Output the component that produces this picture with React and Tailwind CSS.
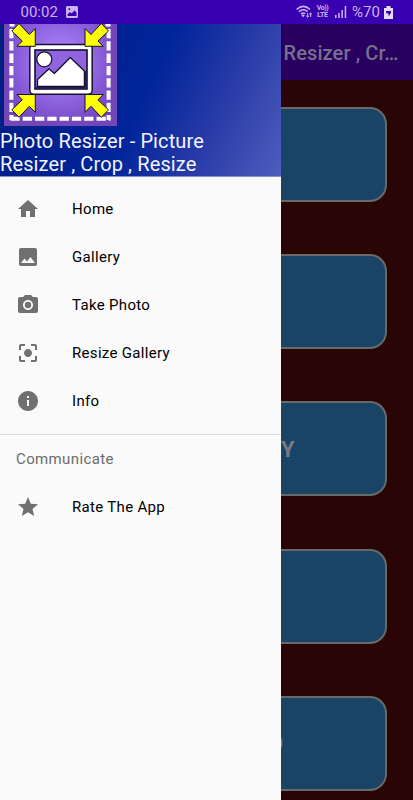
import {
	MdCameraAlt,
	MdCenterFocusStrong,
	MdGrade,
	MdHome,
	MdImage,
	MdInfo,
} from "react-icons/md";

const menuItems = [
	{ label: "Home", icon: MdHome },
	{ label: "Gallery", icon: MdImage },
	{ label: "Take Photo", icon: MdCameraAlt },
	{ label: "Resize Gallery", icon: MdCenterFocusStrong },
	{ label: "Info", icon: MdInfo },
];

const StatusBar = () => {
	return (
		<div className="flex h-6 shrink-0 items-center bg-[#3900b1] pl-[20.5px] pr-5 text-[#c9b5ee]">
			<span className="w-[38px] text-[15px] leading-6 whitespace-nowrap">
				00:02
			</span>
			<svg className="ml-[7px]" width="12" height="12" viewBox="0 0 12 12">
				<path
					fill="currentColor"
					fillRule="evenodd"
					d="M1 0h10l1 1v10l-1 1H1l-1-1V1zM1.5 8.5V10h9V6.5L8.5 4.5 5.5 7.5 4 6zM2.5 2.3v1.6h1.6V2.3z"
				/>
			</svg>
			<div className="ml-auto flex items-center">
				{/* Wifi */}
				<svg width="17" height="14" viewBox="0 0 17 14" fill="none" stroke="currentColor">
					<path strokeWidth="1.5" d="M.6 4.5Q7.3-1.8 14 4.5M2.8 6.8Q7.3 2.7 11.6 6.5M5 9.1Q7.3 7 9.2 8.6" />
					<path fill="currentColor" stroke="none" d="M5.4 10.4Q7.2 8.8 8.8 10.4L7.2 12.2z" />
					<path strokeWidth="1" d="M11.6 8v4M10.2 10.8l1.4 1.4 1.4-1.4M14.6 12V8M13.2 9.4l1.4-1.4L16 9.4" />
				</svg>
				<div className="ml-[3px] w-[13px] text-center text-[7px] font-bold leading-[7px]">
					<div className="tracking-[-0.5px] whitespace-nowrap">Vo))</div>
					<div className="tracking-[-0.2px]">LTE</div>
				</div>
				<svg className="ml-[6px]" width="12" height="12" viewBox="0 0 12 12" fill="currentColor">
					<path d="M0 9h1.5v3H0zM3.2 7h1.5v5H3.2zM6.4 4h1.5v8H6.4zM9.7 0h1.5v12H9.7z" />
				</svg>
				<span className="ml-[5px] w-[28px] text-[15px] leading-6 whitespace-nowrap">
					%70
				</span>
				<svg className="ml-[4px]" width="9" height="13" viewBox="0 0 9 13">
					<path fill="#e5dcf8" d="M2.5 0h4v2H9v11H0V2h2.5z" />
					<path fill="#3900b1" d="M2 5h5v2L4.6 10.6V7.6H2.5z" />
				</svg>
			</div>
		</div>
	);
};

const Arrow = ({ transform }) => (
	<path
		transform={transform}
		d="M11.8 31 19 23.5 29.3 34.5 35.3 28.5V46.3H17L22.3 41z"
		fill="#fdfd05"
		stroke="#15102e"
		strokeWidth="1"
		strokeLinejoin="round"
	/>
);

/* Launcher artwork, its top edge runs under the status bar */
const AppLogo = () => {
	return (
		<svg className="ml-1 block" width="113" height="102" viewBox="4 24 113 102">
			<defs>
				<radialGradient id="glow" cx="50%" cy="45%" r="65%">
					<stop offset="0" stopColor="#b48cff" />
					<stop offset="0.5" stopColor="#9368e4" />
					<stop offset="1" stopColor="#7042bd" />
				</radialGradient>
			</defs>
			<rect x="4" y="14" width="113" height="112" fill="#7446b8" />
			<rect x="9" y="14" width="102" height="107" fill="url(#glow)" />
			<g stroke="#fff" strokeWidth="4" strokeDasharray="9.3 3" fill="none">
				<path d="M11.4 29V120M108.6 29V120" />
				<path d="M9.4 118.8H110.6" strokeDashoffset="-1" />
			</g>
			<path stroke="#fff" strokeWidth="3" d="M9.5 25h5M105.5 25h5" />
			<rect x="29.8" y="44.5" width="62.4" height="49.8" rx="4" fill="#fff" stroke="#15102e" strokeWidth="1.5" />
			<rect x="35" y="50" width="52" height="39" fill="#9063df" stroke="#15102e" strokeWidth="1.6" />
			<path d="M36 87.8H86V71" fill="none" stroke="#2b1c57" strokeWidth="2" />
			<g fill="#fff" stroke="#15102e" strokeWidth="1.3" strokeLinejoin="round">
				<circle cx="44.3" cy="59.3" r="7.5" />
				<path d="M37.5 86.5V79.5L49 68.8 54.3 73.5 70.3 57.5 84.4 71V86.5z" />
			</g>
			<Arrow />
			<Arrow transform="matrix(-1 0 0 1 120.3 0)" />
			<Arrow transform="matrix(1 0 0 -1 0 140.8)" />
			<Arrow transform="matrix(-1 0 0 -1 120.3 140.8)" />
		</svg>
	);
};

const MenuRow = ({ icon: Icon, label }) => (
	<a className="flex h-12 items-center px-4">
		<Icon size={24} className="text-[#707070]" />
		<span className="ml-8 pt-px text-[15px] font-[450] tracking-[0.32px] text-black">
			{label}
		</span>
	</a>
);

const Drawer = () => {
	return (
		<aside className="flex w-[281px] shrink-0 flex-col bg-[#fafafa]">
			<div className="h-[153px] border-b border-[#8c91c9] bg-[linear-gradient(115deg,#001d80_0%,#00249a_50%,#2a3ca8_75%,#4f5dbd_100%)]">
				<AppLogo />
				<div className="pt-[3.6px] text-[20px] leading-[23.4px] tracking-[0.12px] text-[#f3f4ff]">
					Photo Resizer - Picture
					<br />
					Resizer , Crop , Resize
				</div>
			</div>
			<nav className="pt-2">
				{menuItems.map((item) => (
					<MenuRow key={item.label} {...item} />
				))}
				<div className="mt-[9px] h-px bg-[#d9d9d9]" />
				<div className="flex h-12 items-center px-4 pt-px text-[15px] font-[450] tracking-[0.37px] text-[#6c6c6c]">
					Communicate
				</div>
				<MenuRow icon={MdGrade} label="Rate The App" />
			</nav>
		</aside>
	);
};

const ActionCard = ({ children }) => (
	<div className="mr-[26px] flex h-[95px] shrink-0 items-center overflow-hidden rounded-r-[17px] border-2 border-l-0 border-[#696969] bg-[#1a4466] text-[22px] font-bold text-[#777b80]">
		{children}
	</div>
);

/* Strip of the main screen left visible beside the open drawer */
const MainScreen = () => {
	return (
		<main className="flex min-w-0 flex-1 flex-col overflow-hidden bg-[#290505]">
			<header className="flex h-14 shrink-0 items-center bg-[#290061] pl-[2.5px] pt-[2px] text-[20px] font-medium tracking-[0.1px] text-[#77708a]">
				<span className="whitespace-nowrap">Resizer , Cr…</span>
			</header>
			<div className="flex flex-col gap-[52.4px] pt-[26.5px]">
				<ActionCard />
				<ActionCard />
				<ActionCard>
					<span className="pt-[2px]">Y</span>
				</ActionCard>
				<ActionCard />
				<ActionCard>
					<span className="-ml-[13px]">O</span>
				</ActionCard>
			</div>
		</main>
	);
};

const App = () => {
	return (
		<div className="flex h-[800px] w-[413px] flex-col overflow-hidden font-[Roboto,sans-serif]">
			<StatusBar />
			<div className="flex min-h-0 flex-1">
				<Drawer />
				<MainScreen />
			</div>
		</div>
	);
};

export default App;
